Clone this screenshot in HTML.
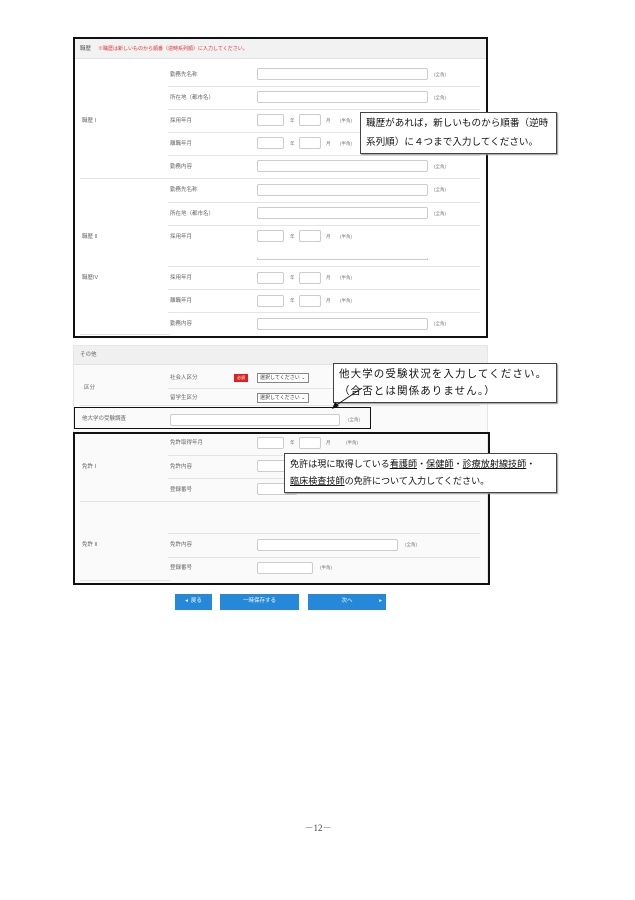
<!DOCTYPE html>
<html><head><meta charset="utf-8"><style>
*{margin:0;padding:0;box-sizing:border-box}
body{width:635px;height:900px;background:#fff;position:relative;overflow:hidden;font-family:"Liberation Sans","Noto Sans CJK JP",sans-serif;color:#555}
.a{position:absolute}
.t{position:absolute;font-size:5.5px;line-height:8px;color:#666;white-space:nowrap}
.n{position:absolute;font-size:4.5px;line-height:8px;color:#777;white-space:nowrap}
.i{position:absolute;height:12px;border:1px solid #ccc;border-radius:2px;background:#fff}
.s{position:absolute;height:1px;background:#e4e4e4}
.box{position:absolute;border:2px solid #111}
.call{position:absolute;border:1px solid #444;background:#fff;color:#111;white-space:nowrap;box-shadow:1px 1px 1px #999;overflow:hidden}
.call u{text-decoration:underline}
.btn{position:absolute;background:#2588d8;color:#fff;font-size:5.5px;line-height:15px;height:16px;text-align:center}
</style></head><body>

<!-- Section 1 -->
<div class="box" style="left:73px;top:37px;width:415px;height:301px"></div>
<div class="a" style="left:75px;top:39px;width:411px;height:20px;background:#f2f2f2;border-bottom:1px solid #e2e2e2"></div>
<div class="t" style="left:80px;top:45px;color:#555">職歴</div>
<div class="t" style="left:98px;top:45px;color:#e03030;font-size:5px">※職歴は新しいものから順番（逆時系列順）に入力してください。</div>

<div class="t" style="left:82px;top:117px">職歴 I</div>
<div class="t" style="left:170px;top:71px">勤務先名称</div><div class="i" style="left:257px;top:68px;width:171px"></div><div class="n" style="left:434px;top:71px">(全角)</div>
<div class="s" style="left:168px;top:86px;width:312px"></div>
<div class="t" style="left:170px;top:94px">所在地（都市名）</div><div class="i" style="left:257px;top:91px;width:171px"></div><div class="n" style="left:434px;top:94px">(全角)</div>
<div class="s" style="left:168px;top:109px;width:312px"></div>
<div class="t" style="left:170px;top:117px">採用年月</div><div class="i" style="left:257px;top:114px;width:27px"></div><div class="n" style="left:290px;top:117px">年</div><div class="i" style="left:299px;top:114px;width:22px"></div><div class="n" style="left:326px;top:117px">月</div><div class="n" style="left:340px;top:117px">(半角)</div>
<div class="s" style="left:168px;top:132px;width:312px"></div>
<div class="t" style="left:170px;top:140px">離職年月</div><div class="i" style="left:257px;top:137px;width:27px"></div><div class="n" style="left:290px;top:140px">年</div><div class="i" style="left:299px;top:137px;width:22px"></div><div class="n" style="left:326px;top:140px">月</div><div class="n" style="left:340px;top:140px">(半角)</div>
<div class="s" style="left:168px;top:155px;width:312px"></div>
<div class="t" style="left:170px;top:163px">勤務内容</div><div class="i" style="left:257px;top:160px;width:171px"></div><div class="n" style="left:434px;top:163px">(全角)</div>
<div class="s" style="left:80px;top:178px;width:400px"></div>

<div class="t" style="left:170px;top:186px">勤務先名称</div><div class="i" style="left:257px;top:184px;width:171px"></div><div class="n" style="left:434px;top:186px">(全角)</div>
<div class="s" style="left:168px;top:202px;width:312px"></div>
<div class="t" style="left:170px;top:210px">所在地（都市名）</div><div class="i" style="left:257px;top:207px;width:171px"></div><div class="n" style="left:434px;top:210px">(全角)</div>
<div class="s" style="left:168px;top:225px;width:312px"></div>
<div class="t" style="left:82px;top:233px">職歴 II</div>
<div class="t" style="left:170px;top:233px">採用年月</div><div class="i" style="left:257px;top:230px;width:27px"></div><div class="n" style="left:290px;top:233px">年</div><div class="i" style="left:299px;top:230px;width:22px"></div><div class="n" style="left:326px;top:233px">月</div><div class="n" style="left:340px;top:233px">(半角)</div>
<div class="a" style="left:257px;top:258px;width:171px;height:2px;border:1px solid #ccc;border-top:none"></div>
<div class="s" style="left:168px;top:266px;width:312px"></div>
<div class="t" style="left:82px;top:274px">職歴IV</div>
<div class="t" style="left:170px;top:274px">採用年月</div><div class="i" style="left:257px;top:272px;width:27px"></div><div class="n" style="left:290px;top:274px">年</div><div class="i" style="left:299px;top:272px;width:22px"></div><div class="n" style="left:326px;top:274px">月</div><div class="n" style="left:340px;top:274px">(半角)</div>
<div class="s" style="left:168px;top:289px;width:312px"></div>
<div class="t" style="left:170px;top:297px">離職年月</div><div class="i" style="left:257px;top:295px;width:27px"></div><div class="n" style="left:290px;top:297px">年</div><div class="i" style="left:299px;top:295px;width:22px"></div><div class="n" style="left:326px;top:297px">月</div><div class="n" style="left:340px;top:297px">(半角)</div>
<div class="s" style="left:168px;top:312px;width:312px"></div>
<div class="t" style="left:170px;top:320px">勤務内容</div><div class="i" style="left:257px;top:318px;width:171px"></div><div class="n" style="left:434px;top:320px">(全角)</div>
<div class="s" style="left:80px;top:334px;width:90px"></div>

<div class="call" style="left:360px;top:112px;width:197px;height:42px;font-size:9.6px;line-height:19px;padding:1px 5px">職歴があれば，新しいものから順番（逆時<br>系列順）に４つまで入力してください。</div>

<!-- Section 2 -->
<div class="a" style="left:73px;top:345px;width:415px;height:240px;background:#fafafa;border:1px solid #e6e6e6"></div>
<div class="a" style="left:74px;top:346px;width:413px;height:19px;background:#f0f0f0;border-bottom:1px solid #e2e2e2"></div>
<div class="t" style="left:80px;top:351px">その他</div>
<div class="t" style="left:84px;top:384px">区分</div>
<div class="t" style="left:170px;top:374px">社会人区分</div>
<div class="a" style="left:234px;top:374px;width:14px;height:8px;background:#e02020;color:#fff;font-size:4px;line-height:8px;text-align:center">必須</div>
<div class="a" style="left:257px;top:373px;width:52px;height:10px;border:1px solid #888;background:#fff;font-size:5px;line-height:8px;color:#333;padding-left:2px;white-space:nowrap">選択してください ⌄</div>
<div class="s" style="left:168px;top:388px;width:312px"></div>
<div class="t" style="left:170px;top:394px">留学生区分</div>
<div class="a" style="left:257px;top:393px;width:52px;height:10px;border:1px solid #888;background:#fff;font-size:5px;line-height:8px;color:#333;padding-left:2px;white-space:nowrap">選択してください ⌄</div>
<div class="s" style="left:80px;top:405px;width:400px"></div>

<div class="box" style="left:74px;top:407px;width:297px;height:22px;border-width:1.5px"></div>
<div class="t" style="left:82px;top:415px">他大学の受験調査</div>
<div class="i" style="left:170px;top:414px;width:170px"></div>
<div class="n" style="left:348px;top:416px">(全角)</div>

<div class="box" style="left:73px;top:432px;width:417px;height:153px"></div>
<div class="t" style="left:170px;top:439px">免許取得年月</div><div class="i" style="left:257px;top:437px;width:27px"></div><div class="n" style="left:290px;top:439px">年</div><div class="i" style="left:299px;top:437px;width:22px"></div><div class="n" style="left:326px;top:439px">月</div><div class="n" style="left:346px;top:439px">(半角)</div>
<div class="s" style="left:168px;top:455px;width:312px"></div>
<div class="t" style="left:82px;top:463px">免許 I</div>
<div class="t" style="left:170px;top:463px">免許内容</div><div class="i" style="left:257px;top:460px;width:40px"></div>
<div class="s" style="left:168px;top:478px;width:312px"></div>
<div class="t" style="left:170px;top:486px">登録番号</div><div class="i" style="left:257px;top:483px;width:40px"></div>
<div class="s" style="left:80px;top:501px;width:400px"></div>
<div class="s" style="left:168px;top:533px;width:312px"></div>
<div class="t" style="left:82px;top:541px">免許 II</div>
<div class="t" style="left:170px;top:541px">免許内容</div><div class="i" style="left:257px;top:539px;width:141px"></div><div class="n" style="left:405px;top:541px">(全角)</div>
<div class="s" style="left:168px;top:557px;width:312px"></div>
<div class="t" style="left:170px;top:564px">登録番号</div><div class="i" style="left:257px;top:562px;width:56px"></div><div class="n" style="left:320px;top:564px">(半角)</div>
<div class="s" style="left:80px;top:580px;width:90px"></div>

<div class="call" style="left:333px;top:363px;width:224px;height:40px;font-size:10.5px;line-height:17px;padding:2px 5px;letter-spacing:1.1px">他大学の受験状況を入力してください。<br>（合否とは関係ありません。）</div>
<svg class="a" style="left:325px;top:385px" width="45" height="30"><line x1="37" y1="3" x2="10" y2="21" stroke="#111" stroke-width="1"/><polygon points="7,24 10,17 14,21" fill="#111"/></svg>

<div class="call" style="left:284px;top:453px;width:273px;height:40px;font-size:9.1px;line-height:17px;padding:2px 5px">免許は現に取得している<u>看護師</u>・<u>保健師</u>・<u>診療放射線技師</u>・<br><u>臨床検査技師</u>の免許について入力してください。</div>

<div class="btn" style="left:175px;top:594px;width:37px">◂ &nbsp;戻る</div>
<div class="btn" style="left:220px;top:594px;width:79px">一時保存する</div>
<div class="btn" style="left:308px;top:594px;width:78px">次へ<span style="position:absolute;right:4px">▸</span></div>

<div class="a" style="left:300px;top:821px;width:36px;font-family:'Liberation Serif','Noto Serif CJK SC',serif;font-size:9px;color:#444;text-align:center">－12－</div>
</body></html>
